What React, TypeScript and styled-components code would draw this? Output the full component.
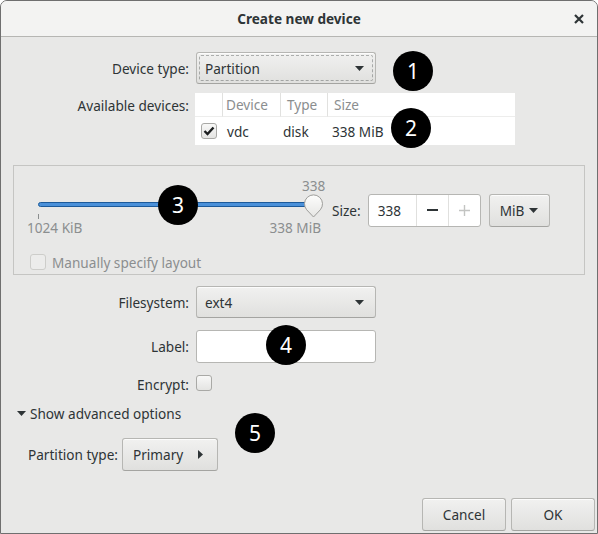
import React from "react";
import styled, { createGlobalStyle } from "styled-components";

const GlobalStyle = createGlobalStyle`
  html, body { margin: 0; padding: 0; background: #ffffff; }
  body {
    font-family: "Noto Sans", "Open Sans", sans-serif;
    font-size: 13.6px;
    color: #2e3436;
  }
  * { box-sizing: border-box; }
`;

const Window = styled.div`
  position: relative;
  width: 598px;
  height: 534px;
  display: flex;
  flex-direction: column;
  background: #e8e8e7;
  border: 1px solid #6f6f6f;
  border-radius: 7px 7px 0 0;
  overflow: hidden;
`;

const TitleBar = styled.div`
  flex: none;
  height: 36px;
  display: grid;
  grid-template-columns: 1fr auto 1fr;
  align-items: center;
  background: #f3f3f2;
  border-bottom: 1px solid #b6b6b3;
`;

const Title = styled.div`
  grid-column: 2;
  font-weight: 700;
`;

const Close = styled.div`
  grid-column: 3;
  justify-self: end;
  margin-right: 12px;
  width: 12px;
  height: 12px;
  display: flex;
  align-items: center;
  justify-content: center;
`;

const Form = styled.div<{ $mt: number; $rows: string; $gap: number }>`
  display: grid;
  grid-template-columns: 188px max-content;
  grid-template-rows: ${(p) => p.$rows};
  column-gap: 7px;
  row-gap: ${(p) => p.$gap}px;
  margin-top: ${(p) => p.$mt}px;
`;

const Label = styled.div<{ $top?: boolean }>`
  justify-self: end;
  align-self: ${(p) => (p.$top ? "start" : "center")};
  margin-top: ${(p) => (p.$top ? "3px" : "0")};
  white-space: nowrap;
`;

const Button = styled.div<{ $w: number; $h?: number; $pl?: number; $pr?: number; $focus?: boolean }>`
  position: relative;
  width: ${(p) => p.$w}px;
  height: ${(p) => p.$h ?? 33}px;
  display: flex;
  align-items: center;
  justify-content: space-between;
  padding: 0 ${(p) => p.$pr ?? 11}px 0 ${(p) => p.$pl ?? 8}px;
  border: 1px solid #b6b6b3;
  border-bottom-color: #a4a4a1;
  border-radius: 3px;
  background: linear-gradient(to bottom, #f1f1f0, #e0e0de);
  box-shadow: inset 0 1px rgba(255, 255, 255, 0.8);
  white-space: nowrap;
  ${(p) =>
    p.$focus
      ? `&::after { content: ""; position: absolute; inset: 2px; border: 1px dashed rgba(46,52,54,0.35); border-radius: 2px; }`
      : ""}
`;

const CenterButton = styled(Button)`
  justify-content: center;
  padding: 0;
`;

const Entry = styled.div<{ $w: number }>`
  width: ${(p) => p.$w}px;
  height: 33px;
  background: #ffffff;
  border: 1px solid #b6b6b3;
  border-radius: 3px;
`;

const Table = styled.div`
  width: 320px;
  height: 52px;
  margin-left: -1px;
  background: #ffffff;
  display: grid;
  grid-template-columns: 28px 58px 47px 1fr;
  grid-template-rows: 24px 28px;
`;

const HeadCell = styled.div<{ $pl: number; $last?: boolean }>`
  display: flex;
  align-items: center;
  padding-left: ${(p) => p.$pl}px;
  color: #8b8e8f;
  border-right: ${(p) => (p.$last ? "none" : "1px solid #e1e1df")};
  border-bottom: 1px solid #ededec;
`;

const Cell = styled.div<{ $pl: number }>`
  display: flex;
  align-items: center;
  padding-left: ${(p) => p.$pl}px;
`;

const Box = styled.div<{ $disabled?: boolean }>`
  width: 16px;
  height: 16px;
  flex: none;
  display: flex;
  align-items: center;
  justify-content: center;
  border: 1px solid ${(p) => (p.$disabled ? "#cdcdca" : "#a9a9a6")};
  border-radius: 3px;
  background: ${(p) =>
    p.$disabled ? "#ececeb" : "linear-gradient(to bottom, #f8f8f7, #e4e4e2)"};
`;

const Frame = styled.div`
  margin: 20px 12px 0 12px;
  height: 110px;
  border: 1px solid #c5c5c3;
  padding: 12px 0 0 13px;
  display: flex;
  flex-direction: column;
`;

const SizeRow = styled.div`
  display: flex;
  align-items: center;
`;

const SliderBox = styled.div`
  width: 296px;
  height: 64px;
  display: flex;
  flex-direction: column;
`;

const SliderValue = styled.div`
  height: 16px;
  line-height: 16px;
  padding-left: 275px;
  color: #8b8e8f;
`;

const TrackRow = styled.div`
  position: relative;
  height: 20px;
`;

const Track = styled.div`
  margin: 8px 0 0 11px;
  width: 278px;
  height: 5px;
  border-radius: 3px;
  background: #4a90d9;
  border: 1px solid #1c5a9a;
`;

const Handle = styled.svg`
  position: absolute;
  left: 276px;
  top: 0;
`;

const Tick = styled.div`
  margin-left: 11px;
  width: 1px;
  height: 5px;
  background: #8b8e8f;
`;

const MarkLabels = styled.div`
  height: 17px;
  line-height: 17px;
  display: flex;
  justify-content: space-between;
  padding-right: 2px;
  color: #8b8e8f;
`;

const SizeLabel = styled.div`
  margin-left: 9px;
`;

const Spin = styled.div`
  margin-left: 7px;
  width: 113px;
  height: 33px;
  display: flex;
  background: #ffffff;
  border: 1px solid #b6b6b3;
  border-radius: 3px;
`;

const SpinText = styled.div`
  width: 47px;
  padding-left: 9px;
  display: flex;
  align-items: center;
`;

const SpinBtn = styled.div`
  flex: 1;
  border-left: 1px solid #e0e0de;
  display: flex;
  align-items: center;
  justify-content: center;
`;

const UnitWrap = styled.div`
  margin-left: 8px;
`;

const CheckRow = styled.div<{ $disabled?: boolean }>`
  margin-top: 11px;
  margin-left: 3px;
  height: 18px;
  display: flex;
  align-items: center;
  gap: 6px;
  color: ${(p) => (p.$disabled ? "#8b8e8f" : "#2e3436")};
`;

const Expander = styled.div`
  margin-top: 11px;
  height: 18px;
  padding-left: 16px;
  display: flex;
  align-items: center;
  gap: 4px;
`;

const PartitionRow = styled.div`
  margin-top: 16px;
  padding-left: 27px;
  display: flex;
  align-items: center;
  gap: 4px;
`;

const Spacer = styled.div`
  flex: 1;
`;

const ButtonBar = styled.div`
  display: flex;
  justify-content: flex-end;
  gap: 5px;
  padding: 0 2px 2px 0;
`;

const Badge = styled.div<{ $x: number; $y: number }>`
  position: absolute;
  left: ${(p) => p.$x - 21}px;
  top: ${(p) => p.$y - 21}px;
  width: 40px;
  height: 40px;
  border-radius: 50%;
  background: #000000;
  color: #ffffff;
  font-size: 21px;
  display: flex;
  align-items: center;
  justify-content: center;
`;

const DownArrow = () => (
  <svg width="9" height="5" viewBox="0 0 9 5">
    <path d="M0 0 L9 0 L4.5 5 Z" fill="#2e3436" />
  </svg>
);

const RightArrow = () => (
  <svg width="5" height="9" viewBox="0 0 5 9">
    <path d="M0 0 L5 4.5 L0 9 Z" fill="#2e3436" />
  </svg>
);

const Check = () => (
  <svg width="12" height="10" viewBox="0 0 12 10">
    <path d="M1.5 5 L4.5 8 L10.5 1.5" stroke="#1c1f20" strokeWidth="2.4" fill="none" />
  </svg>
);

export default function App() {
  return (
    <>
      <GlobalStyle />
      <Window>
        <TitleBar>
          <Title>Create new device</Title>
          <Close>
            <svg width="10" height="10" viewBox="0 0 10 10">
              <path d="M1 1 L9 9 M9 1 L1 9" stroke="#2e3436" strokeWidth="2.2" />
            </svg>
          </Close>
        </TitleBar>

        <Form $mt={15} $rows="32px 52px" $gap={9}>
          <Label>Device type:</Label>
          <Button $w={180} $h={32} $focus>
            <span>Partition</span>
            <DownArrow />
          </Button>
          <Label $top>Available devices:</Label>
          <Table>
            <HeadCell $pl={0} />
            <HeadCell $pl={3}>Device</HeadCell>
            <HeadCell $pl={6}>Type</HeadCell>
            <HeadCell $pl={6} $last>Size</HeadCell>
            <Cell $pl={6}>
              <Box>
                <Check />
              </Box>
            </Cell>
            <Cell $pl={4}>vdc</Cell>
            <Cell $pl={2}>disk</Cell>
            <Cell $pl={4}>338 MiB</Cell>
          </Table>
        </Form>

        <Frame>
          <SizeRow>
            <SliderBox>
              <SliderValue>338</SliderValue>
              <TrackRow>
                <Track />
                <Handle width="21" height="24" viewBox="0 0 21 24">
                  <defs>
                    <linearGradient id="hg" x1="0" y1="0" x2="0" y2="1">
                      <stop offset="0" stopColor="#fdfdfc" />
                      <stop offset="1" stopColor="#e6e6e4" />
                    </linearGradient>
                  </defs>
                  <path
                    d="M10.5 23 L3.7 15.8 A9 9 0 1 1 17.3 15.8 Z"
                    fill="url(#hg)"
                    stroke="#9d9d9a"
                    strokeWidth="1"
                  />
                </Handle>
              </TrackRow>
              <Tick />
              <MarkLabels>
                <span>1024 KiB</span>
                <span>338 MiB</span>
              </MarkLabels>
            </SliderBox>
            <SizeLabel>Size:</SizeLabel>
            <Spin>
              <SpinText>338</SpinText>
              <SpinBtn>
                <svg width="11" height="2" viewBox="0 0 11 2">
                  <rect width="11" height="2" fill="#2e3436" />
                </svg>
              </SpinBtn>
              <SpinBtn>
                <svg width="11" height="11" viewBox="0 0 11 11">
                  <path d="M5.5 0 V11 M0 5.5 H11" stroke="#c3c4c2" strokeWidth="1.4" />
                </svg>
              </SpinBtn>
            </Spin>
            <UnitWrap>
              <Button $w={61} $pl={10} $pr={11}>
                <span>MiB</span>
                <DownArrow />
              </Button>
            </UnitWrap>
          </SizeRow>
          <CheckRow $disabled>
            <Box $disabled />
            <span>Manually specify layout</span>
          </CheckRow>
        </Frame>

        <Form $mt={11} $rows="32px 33px 18px" $gap={12}>
          <Label>Filesystem:</Label>
          <Button $w={180} $h={32}>
            <span>ext4</span>
            <DownArrow />
          </Button>
          <Label>Label:</Label>
          <Entry $w={180} />
          <Label>Encrypt:</Label>
          <Box />
        </Form>

        <Expander>
          <DownArrow />
          <span>Show advanced options</span>
        </Expander>

        <PartitionRow>
          <span>Partition type:</span>
          <Button $w={96} $pl={10} $pr={14}>
            <span>Primary</span>
            <RightArrow />
          </Button>
        </PartitionRow>

        <Spacer />

        <ButtonBar>
          <CenterButton $w={84}>Cancel</CenterButton>
          <CenterButton $w={84}>OK</CenterButton>
        </ButtonBar>

        <Badge $x={413} $y={71}>1</Badge>
        <Badge $x={411} $y={128}>2</Badge>
        <Badge $x={178} $y={205}>3</Badge>
        <Badge $x={286} $y={345}>4</Badge>
        <Badge $x={255} $y={433}>5</Badge>
      </Window>
    </>
  );
}
